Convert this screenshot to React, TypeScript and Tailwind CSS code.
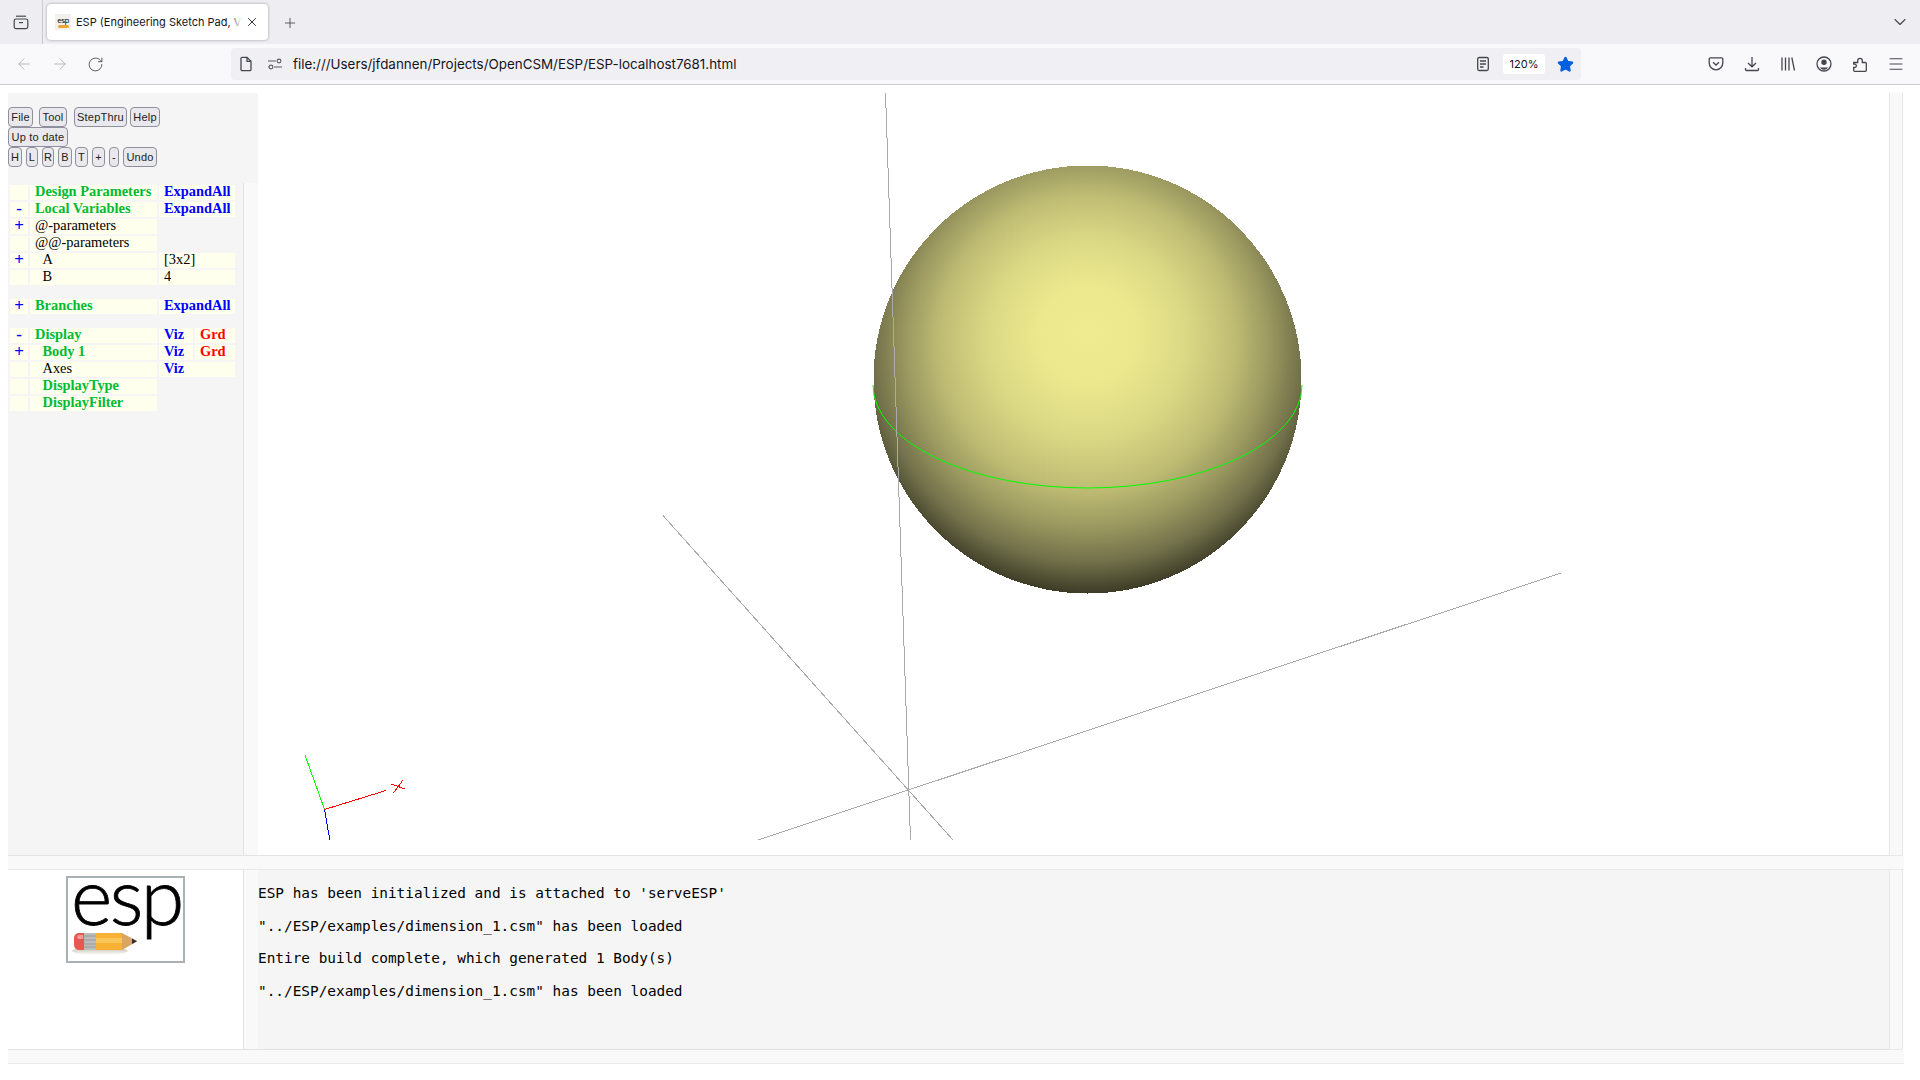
import { ArrowLeft, ArrowRight, RotateCw, Plus, X, ChevronDown, Star, Menu } from "lucide-react";

const toolIcon = "text-[#5b5b66]";
const sans = "font-['Inter','Liberation_Sans',sans-serif]";

// Firefox chrome glyphs lucide has no good match for
function ViewIcon() {
  return (
    <svg viewBox="0 0 16 16" fill="none" stroke="#45454f" strokeWidth={1.2} className="w-4 h-4">
      <path d="M3 2.2h10" />
      <rect x="1.2" y="5" width="13.6" height="9.6" rx="1.8" />
      <path d="M6 8.6h4" />
    </svg>
  );
}

function PageIcon() {
  return (
    <svg viewBox="0 0 16 16" fill="none" stroke="#45454f" strokeWidth={1.3} className="w-4 h-4">
      <path d="M3 2.5a1.2 1.2 0 0 1 1.2-1.2H9l4 4v8.2a1.2 1.2 0 0 1-1.2 1.2H4.2a1.2 1.2 0 0 1-1.2-1.2z" />
      <path d="M9 1.3v4h4" />
    </svg>
  );
}

function PermsIcon() {
  return (
    <svg viewBox="0 0 16 16" fill="none" stroke="#5b5b66" strokeWidth={1.1} className="w-4 h-4">
      <path d="M1 5h8M1 11h.8M7 11h8" />
      <circle cx="12" cy="5" r="1.9" />
      <circle cx="4" cy="11" r="1.9" />
    </svg>
  );
}

function ReaderIcon() {
  return (
    <svg viewBox="0 0 16 16" fill="none" stroke="#45454f" strokeWidth={1.3} className="w-4 h-4">
      <rect x="2.7" y="1.5" width="10.6" height="13" rx="1.5" />
      <path d="M5 5h6M5 8h6M5 11h3.5" />
    </svg>
  );
}

function PocketIcon() {
  return (
    <svg viewBox="0 0 16 16" fill="none" stroke="#45454f" strokeWidth={1.3} className="w-4 h-4">
      <path d="M2.2 1.8h11.6a1 1 0 0 1 1 1V7a6.8 6.8 0 0 1-13.6 0V2.8a1 1 0 0 1 1-1z" />
      <path d="M5 6.2l3 2.8 3-2.8" />
    </svg>
  );
}

function DownloadIcon() {
  return (
    <svg viewBox="0 0 16 16" fill="none" stroke="#45454f" strokeWidth={1.3} className="w-4 h-4">
      <path d="M8 1v9.5M4 7l4 3.8L12 7" />
      <path d="M1.5 12v1.5a1 1 0 0 0 1 1h11a1 1 0 0 0 1-1V12" />
    </svg>
  );
}

function LibraryIcon() {
  return (
    <svg viewBox="0 0 16 16" fill="none" stroke="#45454f" strokeWidth={1.3} className="w-4 h-4">
      <path d="M2 1.5v13M5.5 1.5v13M9 1.5v13M11.8 1.5l2.7 13" />
    </svg>
  );
}

function AccountIcon() {
  return (
    <svg viewBox="0 0 16 16" className="w-4 h-4">
      <circle cx="8" cy="8" r="7" fill="none" stroke="#45454f" strokeWidth={1.3} />
      <circle cx="8" cy="6.3" r="2.7" fill="#45454f" />
      <path d="M3.8 11.5h8.4a5 5 0 0 1-8.4 0z" fill="#45454f" />
    </svg>
  );
}

function ExtensionIcon() {
  return (
    <svg viewBox="0 0 16 16" fill="none" stroke="#45454f" strokeWidth={1.3} className="w-4 h-4">
      <path d="M1.7 6.5h4V4.7a2.3 2.3 0 0 1 4.6 0v1.8h3a1 1 0 0 1 1 1v6.8a1 1 0 0 1-1 1H2.7a1 1 0 0 1-1-1v-2.8h1a1.7 1.7 0 0 0 0-3.4h-1z" />
    </svg>
  );
}

// logo: the word stays real text, the pencil is drawn
function EspLogo() {
  return (
    <div className="w-[119px] h-[87px] border-2 border-[#a9b1b5] bg-white relative">
      <span className="absolute left-[3px] top-[-38px] text-[79px] leading-[110px] tracking-[-2.5px] text-black font-['Lato',sans-serif] font-light [-webkit-text-stroke:0.8px_black]">
        esp
      </span>
      <svg viewBox="0 0 119 87" className="absolute left-[-2px] top-[-2px] w-[119px] h-[87px]">
        <defs>
          <linearGradient id="shadow" x1="0" y1="0" x2="0" y2="1">
            <stop offset="0" stopColor="#8a7a60" stopOpacity="0.55" />
            <stop offset="1" stopColor="#8a7a60" stopOpacity="0" />
          </linearGradient>
        </defs>
        <ellipse cx="34" cy="75" rx="28" ry="4" fill="url(#shadow)" />
        <path d="M13 57h5v17h-5a5 5 0 0 1-5-5v-7a5 5 0 0 1 5-5z" fill="#e8584f" />
        <path d="M12 59h5v4h-5a3 3 0 0 1 0-4z" fill="#f49a90" />
        <rect x="18" y="57" width="12" height="17" fill="#bdbdbd" />
        <path d="M18 60h12M18 64h12M18 68h12M18 71h12" stroke="#8b8b8b" strokeWidth="0.7" />
        <rect x="30" y="57" width="26" height="17" fill="#f7b135" />
        <rect x="30" y="62" width="26" height="5" fill="#fbc655" />
        <path d="M56 57l15 8-1 1-14 8z" fill="#d9a566" />
        <path d="M66 62.5l5 2.7-5 2.8z" fill="#33302c" />
      </svg>
    </div>
  );
}

function Btn({ label, w, ml = "" }: { label: string; w: string; ml?: string }) {
  return (
    <button
      className={`${w} ${ml} h-[20px] rounded-[4px] border-[1.5px] border-[#8f8f9d] bg-[#e9e9ed] text-[11px] leading-none text-[#222] font-['Liberation_Sans',sans-serif] tracking-[0.2px] flex items-center justify-center`}
    >
      {label}
    </button>
  );
}

type Cell = { text?: string; color?: string; bold?: boolean; indent?: boolean };

const green = "#00bb33";
const blue = "#0000ff";
const red = "#ff0000";

function Row({ mark, name, val, val2, gap = "" }: { mark?: string; name: Cell; val?: Cell; val2?: Cell; gap?: string }) {
  const hasVal = val !== undefined;
  return (
    <div className={`flex gap-[2px] h-[15px] leading-[13px] ${gap}`}>
      <div className="w-[18px] bg-[#ffffee] text-center font-bold text-[#0000ff] text-[17px]">{mark}</div>
      <div
        className={`w-[127px] bg-[#ffffee] ${name.indent ? "pl-[12.5px]" : "pl-[5px]"} ${name.bold ? "font-bold" : ""}`}
        style={{ color: name.color ?? "#000" }}
      >
        {name.text}
      </div>
      {hasVal && val2 === undefined && (
        <div className={`w-[76px] bg-[#ffffee] pl-[5px] ${val?.bold ? "font-bold" : ""}`} style={{ color: val?.color ?? "#000" }}>
          {val?.text}
        </div>
      )}
      {hasVal && val2 !== undefined && (
        <>
          <div className="w-[34px] bg-[#ffffee] pl-[5px] font-bold" style={{ color: val?.color }}>
            {val?.text}
          </div>
          <div className="w-[40px] bg-[#ffffee] pl-[5px] font-bold" style={{ color: val2.color }}>
            {val2.text}
          </div>
        </>
      )}
    </div>
  );
}

function Tree() {
  const expand = { text: "ExpandAll", color: blue, bold: true };
  const viz = { text: "Viz", color: blue, bold: true };
  const grd = { text: "Grd", color: red, bold: true };
  return (
    <div className="flex flex-col gap-[2px] pl-[2px] pt-[2px] font-['Liberation_Serif',serif] text-[14.4px]">
      <Row name={{ text: "Design Parameters", color: green, bold: true }} val={expand} />
      <Row mark="-" name={{ text: "Local Variables", color: green, bold: true }} val={expand} />
      <Row mark="+" name={{ text: "@-parameters" }} />
      <Row name={{ text: "@@-parameters" }} />
      <Row mark="+" name={{ text: "A", indent: true }} val={{ text: "[3x2]" }} />
      <Row name={{ text: "B", indent: true }} val={{ text: "4" }} />
      <Row mark="+" name={{ text: "Branches", color: green, bold: true }} val={expand} gap="mt-[12px]" />
      <Row mark="-" name={{ text: "Display", color: green, bold: true }} val={viz} val2={grd} gap="mt-[12px]" />
      <Row mark="+" name={{ text: "Body 1", color: green, bold: true, indent: true }} val={viz} val2={grd} />
      <Row name={{ text: "Axes", indent: true }} val={viz} />
      <Row name={{ text: "DisplayType", color: green, bold: true, indent: true }} />
      <Row name={{ text: "DisplayFilter", color: green, bold: true, indent: true }} />
    </div>
  );
}

// graphics window, viewBox is in page coordinates
function Scene() {
  return (
    <svg viewBox="258 93 1631 747" className="block w-[1631px] h-[747px]">
      <defs>
        <radialGradient id="ball" gradientUnits="userSpaceOnUse" cx="1087.5" cy="350" r="244" fx="1087.5" fy="330">
          <stop offset="0" stopColor="#eeeb90" />
          <stop offset="0.2" stopColor="#ebe88e" />
          <stop offset="0.4" stopColor="#dcd985" />
          <stop offset="0.6" stopColor="#bfbd74" />
          <stop offset="0.75" stopColor="#9a985f" />
          <stop offset="0.88" stopColor="#71704a" />
          <stop offset="1" stopColor="#3c3a25" />
        </radialGradient>
      </defs>
      <circle cx="1087.5" cy="379.5" r="214" fill="url(#ball)" shapeRendering="crispEdges" />
      <path d="M873 385A214.5 103 0 0 0 1302 385" fill="none" stroke="#00ff00" strokeWidth="1" />
      <g stroke="#aaaaaa" strokeWidth="1" shapeRendering="crispEdges">
        <line x1="885.5" y1="93" x2="910.5" y2="840" />
        <line x1="663" y1="515.5" x2="953" y2="840" />
        <line x1="758" y1="840" x2="1561" y2="573" />
      </g>
      <g strokeWidth="1" shapeRendering="crispEdges">
        <line x1="324.5" y1="809.5" x2="305" y2="755" stroke="#00ff00" />
        <line x1="324.5" y1="809.5" x2="330" y2="841" stroke="#0000ff" />
        <line x1="324.5" y1="809.5" x2="386" y2="790.5" stroke="#ff0000" />
        <line x1="391" y1="784" x2="405" y2="789" stroke="#ff0000" />
        <line x1="393.5" y1="793" x2="403" y2="780" stroke="#ff0000" />
      </g>
    </svg>
  );
}

const messages = [
  "ESP has been initialized and is attached to 'serveESP'",
  '"../ESP/examples/dimension_1.csm" has been loaded',
  "Entire build complete, which generated 1 Body(s)",
  '"../ESP/examples/dimension_1.csm" has been loaded',
];

export default function App() {
  return (
    <div className="w-[1920px] h-[1080px] bg-white overflow-hidden">
      {/* tab strip */}
      <div className={`h-[44px] bg-[#ededf2] flex items-center relative ${sans}`}>
        <div className="w-[42px] flex justify-center">
          <ViewIcon />
        </div>
        <div className="w-px h-[44px] bg-[#c9c9cf]" />
        <div className="ml-1 w-[221px] h-[36px] bg-white rounded-[4px] shadow-[0_0_3px_rgba(0,0,0,0.35)] flex items-center pl-2 pr-[9px]">
          <div className="w-4 h-4 flex flex-col items-center justify-start bg-[#f4f1ea]">
            <span className="text-[8px] leading-[11px] text-black tracking-[-0.5px] font-['Open_Sans',sans-serif]">esp</span>
            <span className="w-[11px] h-[3px] bg-[#e9a535] rounded-sm" />
          </div>
          <span className="ml-[5px] relative mt-[1px] text-[11px] text-[#15141a] whitespace-nowrap">
            ESP (Engineering Sketch Pad, V
            <span className="absolute right-0 top-0 bottom-0 w-[10px] bg-linear-to-r from-transparent to-white" />
          </span>
          <X size={14} strokeWidth={1.5} className="ml-auto text-[#15141a]" />
        </div>
        <Plus size={16} strokeWidth={1.3} className="ml-[14px] mt-[1px] text-[#45454f]" />
        <ChevronDown size={20} strokeWidth={1.3} className="ml-auto mr-[10px] text-[#45454f]" />
      </div>

      {/* nav bar */}
      <div className={`h-[41px] bg-[#f9f9fb] border-b border-[#cccccc] flex items-center ${sans}`}>
        <ArrowLeft size={18} strokeWidth={1.2} className="ml-[15px] text-[#b0b0b8]" />
        <ArrowRight size={18} strokeWidth={1.2} className="ml-[18px] text-[#b0b0b8]" />
        <RotateCw size={17} strokeWidth={1.4} className={`ml-[18px] ${toolIcon}`} />
        <div className="ml-[127px] w-[1350px] h-[32px] rounded-[4px] bg-[#f0f0f4] flex items-center">
          <div className="ml-[7px]">
            <PageIcon />
          </div>
          <div className="ml-[13px]">
            <PermsIcon />
          </div>
          <span className="ml-[10px] mt-[1px] text-[13.4px] text-[#15141a] whitespace-nowrap">
            file:///Users/jfdannen/Projects/OpenCSM/ESP/ESP-localhost7681.html
          </span>
          <div className="ml-auto">
            <ReaderIcon />
          </div>
          <div className="ml-[12px] w-[42px] h-[20px] bg-white rounded-[3px] text-[11px] text-[#15141a] flex items-center justify-center">120%</div>
          <Star size={17} className="ml-[12px] mr-[7px] text-[#0060df] fill-[#0060df]" />
        </div>
        <div className="ml-[127px]">
          <PocketIcon />
        </div>
        <div className="ml-[20px]">
          <DownloadIcon />
        </div>
        <div className="ml-[20px]">
          <LibraryIcon />
        </div>
        <div className="ml-[20px]">
          <AccountIcon />
        </div>
        <div className="ml-[20px]">
          <ExtensionIcon />
        </div>
        <Menu size={18} strokeWidth={1.3} className="ml-[19px] text-[#45454f]" />
      </div>

      {/* ESP page: four frames */}
      <div className="pl-2 pt-[8px] w-[1904px]">
        <div className="flex h-[763px]">
          <div className="w-[250px] flex flex-col">
            <div className="h-[90px] bg-[#f5f5f5] pt-[14px] flex flex-col">
              <div className="flex">
                <Btn label="File" w="w-[25px]" />
                <Btn label="Tool" w="w-[28px]" ml="ml-[6px]" />
                <Btn label="StepThru" w="w-[53px]" ml="ml-[7px]" />
                <Btn label="Help" w="w-[30px]" ml="ml-[3px]" />
              </div>
              <div className="flex">
                <Btn label="Up to date" w="w-[60px]" />
              </div>
              <div className="flex">
                <Btn label="H" w="w-[14px]" />
                <Btn label="L" w="w-[12px]" ml="ml-[4px]" />
                <Btn label="R" w="w-[12px]" ml="ml-[4px]" />
                <Btn label="B" w="w-[14px]" ml="ml-[4px]" />
                <Btn label="T" w="w-[13px]" ml="ml-[3px]" />
                <Btn label="+" w="w-[13px]" ml="ml-[4px]" />
                <Btn label="-" w="w-[10px]" ml="ml-[4px]" />
                <Btn label="Undo" w="w-[34px]" ml="ml-[4px]" />
              </div>
            </div>
            <div className="flex-1 flex min-h-0">
              <div className="w-[236px] bg-[#f5f5f5] border-r border-b border-[#e3e3e3]">
                <Tree />
              </div>
              <div className="flex-1 bg-[#f9f9f9] border-b border-[#e3e3e3]" />
            </div>
          </div>
          <div className="w-[1631px] border-b border-[#e3e3e3] bg-white">
            <Scene />
          </div>
          <div className="w-[14px] bg-[#f9f9f9] border-l border-r border-b border-[#e8e8e8]" />
        </div>

        <div className="h-[14px] bg-[#f9f9f9] border-b border-[#e8e8e8]" />

        <div className="flex h-[180px]">
          <div className="w-[236px] bg-white border-r border-b border-[#e3e3e3] flex justify-center pt-[6px]">
            <EspLogo />
          </div>
          <div className="w-[14px] bg-[#f9f9f9] border-b border-[#e3e3e3]" />
          <div className="w-[1631px] bg-[#f5f5f5] border-b border-[#e3e3e3] pt-[7px] font-['DejaVu_Sans_Mono',monospace] text-[14.4px] text-black whitespace-pre">
            {messages.map((m, i) => (
              <div key={i} className="h-[32.7px] leading-[32.7px]">
                {m}
              </div>
            ))}
          </div>
          <div className="w-[14px] bg-[#f9f9f9] border-l border-r border-b border-[#e8e8e8]" />
        </div>
        <div className="h-[14px] bg-[#f9f9f9] border-b border-[#e8e8e8]" />
      </div>
    </div>
  );
}
